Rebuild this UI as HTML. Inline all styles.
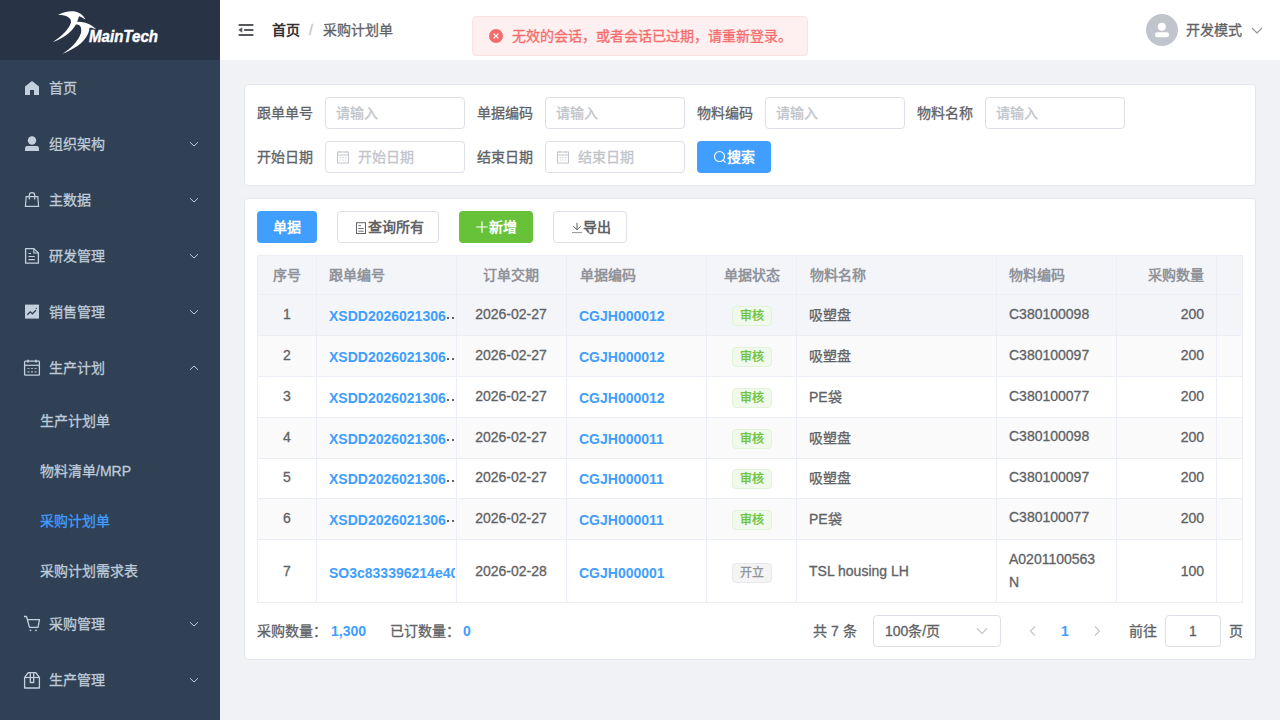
<!DOCTYPE html>
<html lang="zh-CN"><head><meta charset="utf-8">
<style>
*{box-sizing:border-box;margin:0;padding:0}
html,body{width:1280px;height:720px;overflow:hidden}
body{font-family:"Liberation Sans",sans-serif;font-size:14px;-webkit-text-stroke-width:0.3px;color:#606266;background:#f0f2f5;position:relative}
.a{position:absolute;white-space:nowrap}
.th,.btn,.lk,.bd{-webkit-text-stroke-width:0}
#side{position:absolute;left:0;top:0;width:220px;height:720px;background:#304156}
#logo{position:absolute;left:0;top:0;width:220px;height:60px;background:#283446}
.mi{position:absolute;left:0;width:220px;height:56px;color:#bfcbd9;font-size:14px}
.mi .t{position:absolute;left:49px;top:0;line-height:56px}
.mi svg.ic{position:absolute;left:22px;top:26px}
.mi svg.ar{position:absolute;left:189px;top:25px}
.si{position:absolute;left:0;width:220px;height:50px;color:#bfcbd9}
.si .t{position:absolute;left:40px;line-height:50px}
#nav{position:absolute;left:220px;top:0;width:1060px;height:60px;background:#fff}
.card{position:absolute;left:244px;width:1012px;background:#fff;border:1px solid #e4e6ee;border-radius:4px}
.lbl{position:absolute;color:#606266;line-height:32px;white-space:nowrap}
.inp{position:absolute;width:140px;height:32px;border:1px solid #dcdfe6;border-radius:4px;background:#fff;color:#c0c4cc;line-height:30px;padding-left:10px;white-space:nowrap}
.btn{position:absolute;top:211px;height:32px;border-radius:4px;line-height:32px;font-weight:bold;font-size:14px;white-space:nowrap}
#tbl{position:absolute;left:257px;top:255px;width:986px;height:348px;border:1px solid #ebeef5;overflow:hidden}
.row{position:absolute;left:0;width:984px;border-bottom:1px solid #ebeef5}
.vl{position:absolute;top:0;width:1px;height:347px;background:#ebeef5}
.c{position:absolute;white-space:nowrap;color:#606266}
.th{position:absolute;top:0;line-height:38px;font-weight:bold;color:#909399;white-space:nowrap}
.cl{position:absolute;top:-1px;height:100%;display:flex;align-items:center;white-space:nowrap;color:#606266}
.lk{color:#409eff;font-weight:bold;overflow:hidden}
.lkt{display:block;width:126px;overflow:hidden;position:relative;top:2px}
.lkt2{position:relative;top:2px}
.dt{display:inline-block;width:2.2px;height:2.2px;background:#606266;margin-left:2.6px;vertical-align:2.3px}
.tag{display:block;position:relative;top:2px;left:1px;width:40px;height:20px;border-radius:4px;font-size:12px;line-height:18px;text-align:center}
.tg{background:#f0f9eb;border:1px solid #e1f3d8;color:#67c23a}
.ti{background:#f4f4f5;border:1px solid #e9e9eb;color:#909399}
</style></head><body>
<div id="side">
  <div id="logo">
    <svg class="a" style="left:0;top:0" width="220" height="60" viewBox="0 0 220 60">
      <path d="M58,15 C63,12 70,10.5 75,11.5 C80,12.5 84,16 85.5,19.5 C83,18 81,17 79,16.3 C78.5,18 78,20 77,22 C74,30 66,37 52.7,42.2 C62,36 69,29 71,22.5 C71.5,17.5 66,14.8 58,15 Z" fill="#fff"/>
      <path d="M76,21.8 C82,21.5 88,23 91.5,25.5 C93.5,27 95,28 96,29.2 C94,28.2 91.5,27.5 89.5,27.7 C89,35 84,42 75,47.5 C70,50.5 66,52.5 62.4,53.8 C70,49 78,42 81,33 C82,27 80,24.5 76,24.6 Z" fill="#fff"/>
      <text x="89" y="42.2" font-family="Liberation Sans" font-weight="bold" font-style="italic" font-size="17" fill="#fff" stroke="#fff" stroke-width="0.45" textLength="69" lengthAdjust="spacingAndGlyphs">MainTech</text>
    </svg>
  </div>
  <div class="mi" style="top:60px">
    <svg class="ic" style="top:21px;left:25px" width="14" height="14" viewBox="0 0 14 14"><path d="M7 0 L14 5.5 V14 H9 V9 H5 V14 H0 V5.5Z" fill="#c3cfdc"/></svg>
    <div class="t">首页</div></div>
  <div class="mi" style="top:116px">
    <svg class="ic" style="top:20px;left:25px" width="14" height="15" viewBox="0 0 14 15"><circle cx="7" cy="4.5" r="4.2" fill="#c3cfdc"/><path d="M0 13 C0 10.5 1.2 10 3 10 H11 C12.8 10 14 10.5 14 13 V15 H0Z" fill="#c3cfdc"/></svg>
    <div class="t">组织架构</div>
    <svg class="ar" width="10" height="6" viewBox="0 0 10 6"><path d="M1 1.2 L5 5 L9 1.2" stroke="#bfcbd9" fill="none" stroke-width="1"/></svg></div>
  <div class="mi" style="top:172px">
    <svg class="ic" style="top:19px;left:24px" width="16" height="17" viewBox="0 0 16 17"><path d="M2.2 5.6 H13.8 L14.6 15.4 H1.4Z" stroke="#c3cfdc" stroke-width="1.2" fill="none"/><path d="M5.3 8.5 V4.4 A2.7 2.7 0 0 1 10.7 4.4 V8.5" stroke="#c3cfdc" stroke-width="1.2" fill="none"/></svg>
    <div class="t">主数据</div>
    <svg class="ar" width="10" height="6" viewBox="0 0 10 6"><path d="M1 1.2 L5 5 L9 1.2" stroke="#bfcbd9" fill="none" stroke-width="1"/></svg></div>
  <div class="mi" style="top:228px">
    <svg class="ic" style="top:19px;left:24px" width="16" height="18" viewBox="0 0 16 18"><path d="M1.6 1.6 H9.8 L14.4 6 V16.2 H1.6Z" stroke="#c3cfdc" stroke-width="1.3" fill="none" stroke-linejoin="round"/><path d="M9.8 1.6 V6 H14.4" stroke="#c3cfdc" stroke-width="1.2" fill="none"/><path d="M4.5 6.5 H7 M4.5 9.5 H10.8 M4.5 12.6 H10.8" stroke="#c3cfdc" stroke-width="1.2"/></svg>
    <div class="t">研发管理</div>
    <svg class="ar" width="10" height="6" viewBox="0 0 10 6"><path d="M1 1.2 L5 5 L9 1.2" stroke="#bfcbd9" fill="none" stroke-width="1"/></svg></div>
  <div class="mi" style="top:284px">
    <svg class="ic" style="top:20px;left:25px" width="14" height="15" viewBox="0 0 14 15"><rect x="0" y="0.6" width="14" height="14" fill="#c3cfdc"/><path d="M2.3 10.8 L5.3 7.8 L7.4 9.8 L11 6.3" stroke="#304156" stroke-width="1.3" fill="none"/><path d="M10.5 4.2 L12 3.6 L11.7 5.2Z" fill="#304156"/></svg>
    <div class="t">销售管理</div>
    <svg class="ar" width="10" height="6" viewBox="0 0 10 6"><path d="M1 1.2 L5 5 L9 1.2" stroke="#bfcbd9" fill="none" stroke-width="1"/></svg></div>
  <div class="mi" style="top:340px">
    <svg class="ic" style="top:19px;left:23px" width="18" height="18" viewBox="0 0 18 18"><rect x="1.6" y="2.2" width="14.8" height="14" rx="0.8" stroke="#c3cfdc" stroke-width="1.3" fill="none"/><path d="M1.6 6.3 H16.4" stroke="#c3cfdc" stroke-width="1.2"/><path d="M5 0.8 V3.6 M13 0.8 V3.6" stroke="#c3cfdc" stroke-width="1.6"/><path d="M4.5 9.5 H6.5 M8 9.5 H10 M11.5 9.5 H13.5 M4.5 12.8 H6.5 M8 12.8 H10 M11.5 12.8 H13.5" stroke="#a9b5c3" stroke-width="1.2"/></svg>
    <div class="t">生产计划</div>
    <svg class="ar" width="10" height="6" viewBox="0 0 10 6"><path d="M1 4.8 L5 1 L9 4.8" stroke="#bfcbd9" fill="none" stroke-width="1"/></svg></div>
  <div class="si" style="top:396px"><div class="t">生产计划单</div></div>
  <div class="si" style="top:446px"><div class="t">物料清单/MRP</div></div>
  <div class="si" style="top:496px"><div class="t" style="color:#409eff">采购计划单</div></div>
  <div class="si" style="top:546px"><div class="t">采购计划需求表</div></div>
  <div class="mi" style="top:596px">
    <svg class="ic" style="top:19px;left:23px" width="18" height="18" viewBox="0 0 18 18"><path d="M1 1.5 H3.5 L6.5 12.3 H15 L16.5 4.6 H4.8" stroke="#c3cfdc" stroke-width="1.3" fill="none" stroke-linejoin="round"/><circle cx="7.5" cy="15.3" r="0.9" fill="#c3cfdc"/><circle cx="13" cy="15.3" r="0.9" fill="#c3cfdc"/></svg>
    <div class="t">采购管理</div>
    <svg class="ar" width="10" height="6" viewBox="0 0 10 6"><path d="M1 1.2 L5 5 L9 1.2" stroke="#bfcbd9" fill="none" stroke-width="1"/></svg></div>
  <div class="mi" style="top:652px">
    <svg class="ic" style="top:19px;left:23px" width="18" height="18" viewBox="0 0 18 18"><path d="M1.6 6.5 L5.2 1.6 H12.8 L16.4 6.5 V17 H1.6Z" stroke="#c3cfdc" stroke-width="1.3" fill="none" stroke-linejoin="round"/><path d="M1.6 6.5 H16.4" stroke="#c3cfdc" stroke-width="1.2"/><path d="M7.3 1.6 V11.5 H10.7 V1.6" stroke="#c3cfdc" stroke-width="1.3" fill="none"/></svg>
    <div class="t">生产管理</div>
    <svg class="ar" width="10" height="6" viewBox="0 0 10 6"><path d="M1 1.2 L5 5 L9 1.2" stroke="#bfcbd9" fill="none" stroke-width="1"/></svg></div>
</div>

<div id="nav"></div>
<!-- hamburger -->
<svg class="a" style="left:237px;top:22px" width="18" height="16" viewBox="0 0 18 16">
  <rect x="1.4" y="2" width="15.2" height="2" rx="1" fill="#55585e"/>
  <rect x="6.8" y="7" width="9.8" height="2" rx="1" fill="#55585e"/>
  <rect x="1.4" y="12" width="15.2" height="2" rx="1" fill="#55585e"/>
  <path d="M1.8 8 L5 5.8 V10.2Z" fill="#55585e" stroke="#55585e" stroke-width="0.6" stroke-linejoin="round"/>
</svg>
<div class="a bd" style="left:272px;top:20px;line-height:20px;font-weight:bold;color:#303133">首页</div>
<div class="a" style="left:309px;top:20px;line-height:20px;color:#c0c4cc">/</div>
<div class="a" style="left:323px;top:20px;line-height:20px;color:#606266">采购计划单</div>

<!-- toast -->
<div class="a" style="left:472px;top:16px;width:336px;height:40px;background:#fef0f0;border:1px solid #fde2e2;border-radius:4px"></div>
<svg class="a" style="left:489px;top:29px" width="14" height="14" viewBox="0 0 14 14"><circle cx="7" cy="7" r="7" fill="#f56c6c"/><path d="M4.6 4.6 L9.4 9.4 M9.4 4.6 L4.6 9.4" stroke="#fff" stroke-width="1.3"/></svg>
<div class="a" style="left:512px;top:25.5px;line-height:20px;color:#f56c6c">无效的会话，或者会话已过期，请重新登录。</div>

<!-- user -->
<svg class="a" style="left:1146px;top:14px" width="32" height="32" viewBox="0 0 32 32"><circle cx="16" cy="16" r="16" fill="#c0c4cc"/><circle cx="16" cy="16.8" r="0" fill="#fff"/><circle cx="15.8" cy="12.75" r="4" fill="#fff"/><rect x="9" y="18.3" width="14" height="5" rx="2.2" fill="#fff"/></svg>
<div class="a" style="left:1186px;top:20px;line-height:20px;color:#606266">开发模式</div>
<svg class="a" style="left:1251px;top:27px" width="12" height="7" viewBox="0 0 12 7"><path d="M1 1 L6 6 L11 1" stroke="#909399" fill="none" stroke-width="1.1"/></svg>

<!-- search card -->
<div class="card" style="top:84px;height:102px"></div>
<div class="lbl" style="left:257px;top:97px">跟单单号</div>
<div class="inp" style="left:325px;top:97px">请输入</div>
<div class="lbl" style="left:477px;top:97px">单据编码</div>
<div class="inp" style="left:545px;top:97px">请输入</div>
<div class="lbl" style="left:697px;top:97px">物料编码</div>
<div class="inp" style="left:765px;top:97px">请输入</div>
<div class="lbl" style="left:917px;top:97px">物料名称</div>
<div class="inp" style="left:985px;top:97px">请输入</div>
<div class="lbl" style="left:257px;top:141px">开始日期</div>
<div class="inp" style="left:325px;top:141px;padding-left:32px">开始日期</div>
<div class="lbl" style="left:477px;top:141px">结束日期</div>
<div class="inp" style="left:545px;top:141px;padding-left:32px">结束日期</div>
<svg class="a" style="left:336px;top:150px" width="14" height="14" viewBox="0 0 14 14"><rect x="1.5" y="2" width="11" height="11" stroke="#c0c4cc" fill="none"/><path d="M1.5 5 H12.5" stroke="#c0c4cc"/><path d="M4 1 V3 M10 1 V3" stroke="#c0c4cc"/><path d="M3.5 7.5 H5 M6.3 7.5 H7.8 M9 7.5 H10.5 M3.5 10 H5 M6.3 10 H7.8 M9 10 H10.5" stroke="#d0d3d9"/></svg>
<svg class="a" style="left:556px;top:150px" width="14" height="14" viewBox="0 0 14 14"><rect x="1.5" y="2" width="11" height="11" stroke="#c0c4cc" fill="none"/><path d="M1.5 5 H12.5" stroke="#c0c4cc"/><path d="M4 1 V3 M10 1 V3" stroke="#c0c4cc"/><path d="M3.5 7.5 H5 M6.3 7.5 H7.8 M9 7.5 H10.5 M3.5 10 H5 M6.3 10 H7.8 M9 10 H10.5" stroke="#d0d3d9"/></svg>
<div class="btn" style="left:697px;top:141px;width:74px;background:#409eff;color:#fff">
  <svg class="a" style="left:16px;top:9px" width="14" height="14" viewBox="0 0 14 14"><circle cx="6.5" cy="6.5" r="5" stroke="#fff" stroke-width="1.1" fill="none"/><path d="M10.1 10.1 L12.6 12.6" stroke="#fff" stroke-width="1.1"/></svg>
  <span class="a" style="left:30px;top:0">搜索</span>
</div>

<!-- table card -->
<div class="card" style="top:198px;height:462px"></div>
<div class="btn" style="left:257px;width:60px;background:#409eff;color:#fff;text-align:center">单据</div>
<div class="btn" style="left:337px;width:102px;background:#fff;border:1px solid #dcdfe6;color:#606266;line-height:30px">
  <svg class="a" style="left:16px;top:8px" width="14" height="16" viewBox="0 0 14 16"><rect x="2.5" y="2.7" width="9" height="10.8" stroke="#606266" stroke-width="1" fill="none"/><path d="M4.3 5.7 H7 M4.3 8.5 H9.7 M4.3 11.2 H9.7" stroke="#606266" stroke-width="0.9"/></svg>
  <span class="a" style="left:29.5px;top:0">查询所有</span>
</div>
<div class="btn" style="left:459px;width:74px;background:#67c23a;color:#fff">
  <svg class="a" style="left:17px;top:10px" width="12" height="12" viewBox="0 0 12 12"><path d="M6 0.2 V11.7 M0.2 6 H11.7" stroke="#fff" stroke-width="1.2"/></svg>
  <span class="a" style="left:30px;top:0">新增</span>
</div>
<div class="btn" style="left:553px;width:74px;background:#fff;border:1px solid #dcdfe6;color:#606266;line-height:30px">
  <svg class="a" style="left:16px;top:8px" width="14" height="16" viewBox="0 0 14 16"><path d="M7 2.8 V9.6 M3.2 6.2 L7 9.8 L10.8 6.2" stroke="#606266" stroke-width="1" fill="none"/><path d="M2 12.6 H12" stroke="#909399" stroke-width="1"/></svg>
  <span class="a" style="left:29px;top:0">导出</span>
</div>

<div id="tbl">
  <div class="row" style="top:0;height:39px;background:#f4f5f9"></div>
  <div class="row" style="top:39px;height:41px;background:#f4f5f9;">
 <div class="cl" style="left:0;width:58px;justify-content:center">1</div>
 <div class="cl lk" style="left:71px;width:126px"><span class="lkt">XSDD2026021306<i class="dt" style="margin-left:1.2px"></i><i class="dt"></i></span></div>
 <div class="cl" style="left:198px;width:110px;justify-content:center">2026-02-27</div>
 <div class="cl lk" style="left:321px"><span class="lkt2">CGJH000012</span></div>
 <div class="cl" style="left:448px;width:90px;justify-content:center"><span class="tag tg">审核</span></div>
 <div class="cl" style="left:551px">吸塑盘</div>
 <div class="cl" style="left:751px;line-height:23px;white-space:normal">C380100098</div>
 <div class="cl" style="left:858px;width:88px;justify-content:flex-end">200</div>
</div>
<div class="row" style="top:80px;height:41px;background:#fafafa;">
 <div class="cl" style="left:0;width:58px;justify-content:center">2</div>
 <div class="cl lk" style="left:71px;width:126px"><span class="lkt">XSDD2026021306<i class="dt" style="margin-left:1.2px"></i><i class="dt"></i></span></div>
 <div class="cl" style="left:198px;width:110px;justify-content:center">2026-02-27</div>
 <div class="cl lk" style="left:321px"><span class="lkt2">CGJH000012</span></div>
 <div class="cl" style="left:448px;width:90px;justify-content:center"><span class="tag tg">审核</span></div>
 <div class="cl" style="left:551px">吸塑盘</div>
 <div class="cl" style="left:751px;line-height:23px;white-space:normal">C380100097</div>
 <div class="cl" style="left:858px;width:88px;justify-content:flex-end">200</div>
</div>
<div class="row" style="top:121px;height:41px;background:#fff;">
 <div class="cl" style="left:0;width:58px;justify-content:center">3</div>
 <div class="cl lk" style="left:71px;width:126px"><span class="lkt">XSDD2026021306<i class="dt" style="margin-left:1.2px"></i><i class="dt"></i></span></div>
 <div class="cl" style="left:198px;width:110px;justify-content:center">2026-02-27</div>
 <div class="cl lk" style="left:321px"><span class="lkt2">CGJH000012</span></div>
 <div class="cl" style="left:448px;width:90px;justify-content:center"><span class="tag tg">审核</span></div>
 <div class="cl" style="left:551px">PE袋</div>
 <div class="cl" style="left:751px;line-height:23px;white-space:normal">C380100077</div>
 <div class="cl" style="left:858px;width:88px;justify-content:flex-end">200</div>
</div>
<div class="row" style="top:162px;height:40.5px;background:#fafafa;">
 <div class="cl" style="left:0;width:58px;justify-content:center">4</div>
 <div class="cl lk" style="left:71px;width:126px"><span class="lkt">XSDD2026021306<i class="dt" style="margin-left:1.2px"></i><i class="dt"></i></span></div>
 <div class="cl" style="left:198px;width:110px;justify-content:center">2026-02-27</div>
 <div class="cl lk" style="left:321px"><span class="lkt2">CGJH000011</span></div>
 <div class="cl" style="left:448px;width:90px;justify-content:center"><span class="tag tg">审核</span></div>
 <div class="cl" style="left:551px">吸塑盘</div>
 <div class="cl" style="left:751px;line-height:23px;white-space:normal">C380100098</div>
 <div class="cl" style="left:858px;width:88px;justify-content:flex-end">200</div>
</div>
<div class="row" style="top:202.5px;height:40.5px;background:#fff;">
 <div class="cl" style="left:0;width:58px;justify-content:center">5</div>
 <div class="cl lk" style="left:71px;width:126px"><span class="lkt">XSDD2026021306<i class="dt" style="margin-left:1.2px"></i><i class="dt"></i></span></div>
 <div class="cl" style="left:198px;width:110px;justify-content:center">2026-02-27</div>
 <div class="cl lk" style="left:321px"><span class="lkt2">CGJH000011</span></div>
 <div class="cl" style="left:448px;width:90px;justify-content:center"><span class="tag tg">审核</span></div>
 <div class="cl" style="left:551px">吸塑盘</div>
 <div class="cl" style="left:751px;line-height:23px;white-space:normal">C380100097</div>
 <div class="cl" style="left:858px;width:88px;justify-content:flex-end">200</div>
</div>
<div class="row" style="top:243px;height:40.5px;background:#fafafa;">
 <div class="cl" style="left:0;width:58px;justify-content:center">6</div>
 <div class="cl lk" style="left:71px;width:126px"><span class="lkt">XSDD2026021306<i class="dt" style="margin-left:1.2px"></i><i class="dt"></i></span></div>
 <div class="cl" style="left:198px;width:110px;justify-content:center">2026-02-27</div>
 <div class="cl lk" style="left:321px"><span class="lkt2">CGJH000011</span></div>
 <div class="cl" style="left:448px;width:90px;justify-content:center"><span class="tag tg">审核</span></div>
 <div class="cl" style="left:551px">PE袋</div>
 <div class="cl" style="left:751px;line-height:23px;white-space:normal">C380100077</div>
 <div class="cl" style="left:858px;width:88px;justify-content:flex-end">200</div>
</div>
<div class="row" style="top:283.5px;height:64.5px;background:#fff;border-bottom:none;">
 <div class="cl" style="left:0;width:58px;justify-content:center">7</div>
 <div class="cl lk" style="left:71px;width:126px"><span class="lkt">SO3c833396214e40</span></div>
 <div class="cl" style="left:198px;width:110px;justify-content:center">2026-02-28</div>
 <div class="cl lk" style="left:321px"><span class="lkt2">CGJH000001</span></div>
 <div class="cl" style="left:448px;width:90px;justify-content:center"><span class="tag ti">开立</span></div>
 <div class="cl" style="left:551px">TSL housing LH</div>
 <div class="cl" style="left:751px;line-height:23px;white-space:normal">A0201100563<br>N</div>
 <div class="cl" style="left:858px;width:88px;justify-content:flex-end">100</div>
</div>
  <div class="vl" style="left:58px"></div>
  <div class="vl" style="left:198px"></div>
  <div class="vl" style="left:308px"></div>
  <div class="vl" style="left:448px"></div>
  <div class="vl" style="left:538px"></div>
  <div class="vl" style="left:738px"></div>
  <div class="vl" style="left:858px"></div>
  <div class="vl" style="left:958px"></div>

  <div class="th" style="left:15px">序号</div>
  <div class="th" style="left:71px">跟单编号</div>
  <div class="th" style="left:225px">订单交期</div>
  <div class="th" style="left:322px">单据编码</div>
  <div class="th" style="left:465.5px">单据状态</div>
  <div class="th" style="left:552px">物料名称</div>
  <div class="th" style="left:751px">物料编码</div>
  <div class="th" style="left:889.5px">采购数量</div>
</div>
<!-- footer -->
<div class="a" style="left:257px;top:621px;line-height:20px">采购数量：</div>
<div class="a bd" style="left:331px;top:621px;line-height:20px;color:#409eff;font-weight:bold">1,300</div>
<div class="a" style="left:390px;top:621px;line-height:20px">已订数量：</div>
<div class="a bd" style="left:463px;top:621px;line-height:20px;color:#409eff;font-weight:bold">0</div>

<div class="a" style="left:813px;top:621px;line-height:20px">共 7 条</div>
<div class="a" style="left:873px;top:615px;width:128px;height:32px;border:1px solid #dcdfe6;border-radius:4px;background:#fff"></div>
<div class="a" style="left:885px;top:621px;line-height:20px">100条/页</div>
<svg class="a" style="left:976px;top:627px" width="12" height="8" viewBox="0 0 12 8"><path d="M1 1.5 L6 6.5 L11 1.5" stroke="#c0c4cc" fill="none" stroke-width="1.1"/></svg>
<svg class="a" style="left:1029px;top:626px" width="7" height="10" viewBox="0 0 7 10"><path d="M6 0.5 L1.5 5 L6 9.5" stroke="#c0c4cc" fill="none" stroke-width="1.1"/></svg>
<div class="a bd" style="left:1061px;top:621px;line-height:20px;color:#409eff;font-weight:bold">1</div>
<svg class="a" style="left:1094px;top:626px" width="7" height="10" viewBox="0 0 7 10"><path d="M1 0.5 L5.5 5 L1 9.5" stroke="#c0c4cc" fill="none" stroke-width="1.1"/></svg>
<div class="a" style="left:1129px;top:621px;line-height:20px">前往</div>
<div class="a" style="left:1165px;top:615px;width:56px;height:32px;border:1px solid #dcdfe6;border-radius:4px;background:#fff;text-align:center;line-height:30px">1</div>
<div class="a" style="left:1229px;top:621px;line-height:20px">页</div>
</body></html>
